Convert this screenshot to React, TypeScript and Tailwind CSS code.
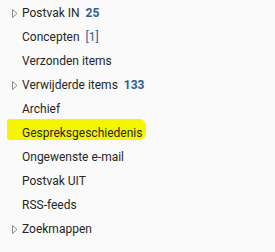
import React from 'react';

type Folder = {
  name: string;
  expandable?: boolean;
  count?: string;
  bold?: boolean;
  highlight?: boolean;
};

const folders: Folder[] = [
  { name: 'Postvak IN', expandable: true, count: '25', bold: true },
  { name: 'Concepten', count: '[1]' },
  { name: 'Verzonden items' },
  { name: 'Verwijderde items', expandable: true, count: '133', bold: true },
  { name: 'Archief' },
  { name: 'Gespreksgeschiedenis', highlight: true },
  { name: 'Ongewenste e-mail' },
  { name: 'Postvak UIT' },
  { name: 'RSS-feeds' },
  { name: 'Zoekmappen', expandable: true },
];

const Caret = () => (
  <svg width="6" height="9" viewBox="0 0 6 9" className="absolute left-[12px] top-[8px]">
    <path d="M0.5 0.5 L5 4.5 L0.5 8.5 Z" fill="none" stroke="#8a8a8a" strokeWidth="1" />
  </svg>
);

export default function App() {
  return (
    <div className="w-[275px] h-[252px] bg-[#fafafa] pt-px font-['Roboto',sans-serif] text-[12px] text-[#262626]">
      {folders.map((f) => (
        <div key={f.name} className="relative h-6 flex items-center pl-[22px]">
          {f.expandable && <Caret />}
          {f.highlight && (
            <span className="absolute left-[7px] top-[-2px] w-[139px] h-[21px] bg-[#f6f500] rounded-l-[3px] rounded-r-[7px]" />
          )}
          <span className="relative">{f.name}</span>
          {f.count && (
            <span className={`relative ml-[6px] text-[#2f5f8f] ${f.bold ? 'font-bold' : ''}`}>{f.count}</span>
          )}
        </div>
      ))}
    </div>
  );
}
